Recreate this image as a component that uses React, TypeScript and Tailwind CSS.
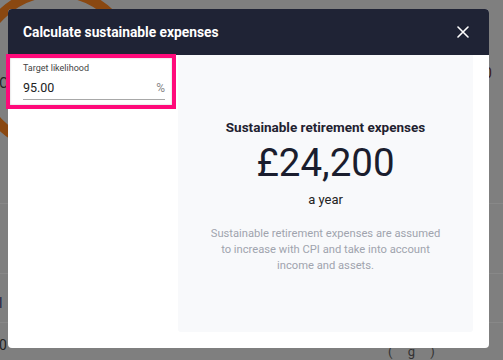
import React from "react";

export default function App() {
  const font = { fontFamily: "Roboto, 'Liberation Sans', sans-serif" };
  return (
    <div className="relative w-[503px] h-[360px] overflow-hidden bg-[#7f7f7f]" style={font}>
      {/* background page remnants */}
      <div className="absolute left-[-27px] top-[-13px] w-[166px] h-[166px] rounded-full border-[10px] border-[#8a4811]" />
      <div className="absolute left-0 right-0 top-[203px] h-px bg-[#888888]" />
      <div className="absolute left-0 right-0 top-[273px] h-px bg-[#888888]" />
      <div className="absolute left-0 right-0 top-[322px] h-px bg-[#888888]" />
      <div className="absolute left-[-1px] top-[74px] text-[14px] text-[#222] leading-[18px]">C</div>
      <div className="absolute left-[484px] top-[64px] text-[14px] text-[#3a1a1a] leading-[18px]">0</div>
      <div className="absolute left-[-1px] top-[294px] text-[14px] text-[#1c2344] leading-[18px]">l</div>
      <div className="absolute left-[-1px] top-[336px] text-[14px] text-[#222] leading-[18px]">0</div>
      <div className="absolute left-[388px] top-[343px] text-[13px] text-[#333] leading-[18px] tracking-[6px]">( g )</div>

      {/* modal */}
      <div className="absolute left-[8px] top-[9px] w-[481px] h-[339px] rounded-[4px] bg-white flex flex-col">
        <div className="h-[46px] shrink-0 rounded-t-[4px] bg-[#1f2335] flex items-center justify-between pl-[15px] pr-[20px]">
          <span className="text-white font-bold text-[13.8px]">Calculate sustainable expenses</span>
          <svg width="12" height="12" viewBox="0 0 12 12" fill="none">
            <path d="M1 1L11 11M11 1L1 11" stroke="white" strokeWidth="1.6" strokeLinecap="round" />
          </svg>
        </div>
        <div className="flex flex-1 min-h-0">
          <div className="w-[170px] shrink-0 relative">
            <div className="ml-[-2px] w-[170px] h-[55px] mt-[-1px] border-[4px] border-[#ff0a7a] bg-white shadow-[inset_0_0_2px_rgba(0,0,0,0.25)] pl-[13px] pr-[7px] pt-[4px]">
              <div className="text-[9px] leading-[13px] text-[#444]">Target likelihood</div>
              <div className="flex items-end justify-between border-b border-[#a8a8a8] pt-[4px] pb-[2px]">
                <span className="text-[12.5px] leading-[18px] text-[#222]">95.00</span>
                <span className="text-[12px] leading-[16px] text-[#888] mb-[1px]">%</span>
              </div>
            </div>
          </div>
          <div className="flex-1 mr-[16px] mb-[16px] rounded-b-[3px] bg-[#f8f9fb] flex flex-col items-center pt-[62px]">
            <div className="text-[13.5px] leading-[20px] font-bold text-[#1f2230]">Sustainable retirement expenses</div>
            <div className="mt-[2px] text-[38.5px] leading-[48px] text-[#1a1d2e]">£24,200</div>
            <div className="mt-[4px] text-[13px] leading-[18px] text-[#222]">a year</div>
            <div className="mt-[17px] w-[236px] text-center text-[11.2px] leading-[16px] text-[#a0a4ae]">
              Sustainable retirement expenses are assumed to increase with CPI and take into account income and assets.
            </div>
          </div>
        </div>
      </div>
    </div>
  );
}
